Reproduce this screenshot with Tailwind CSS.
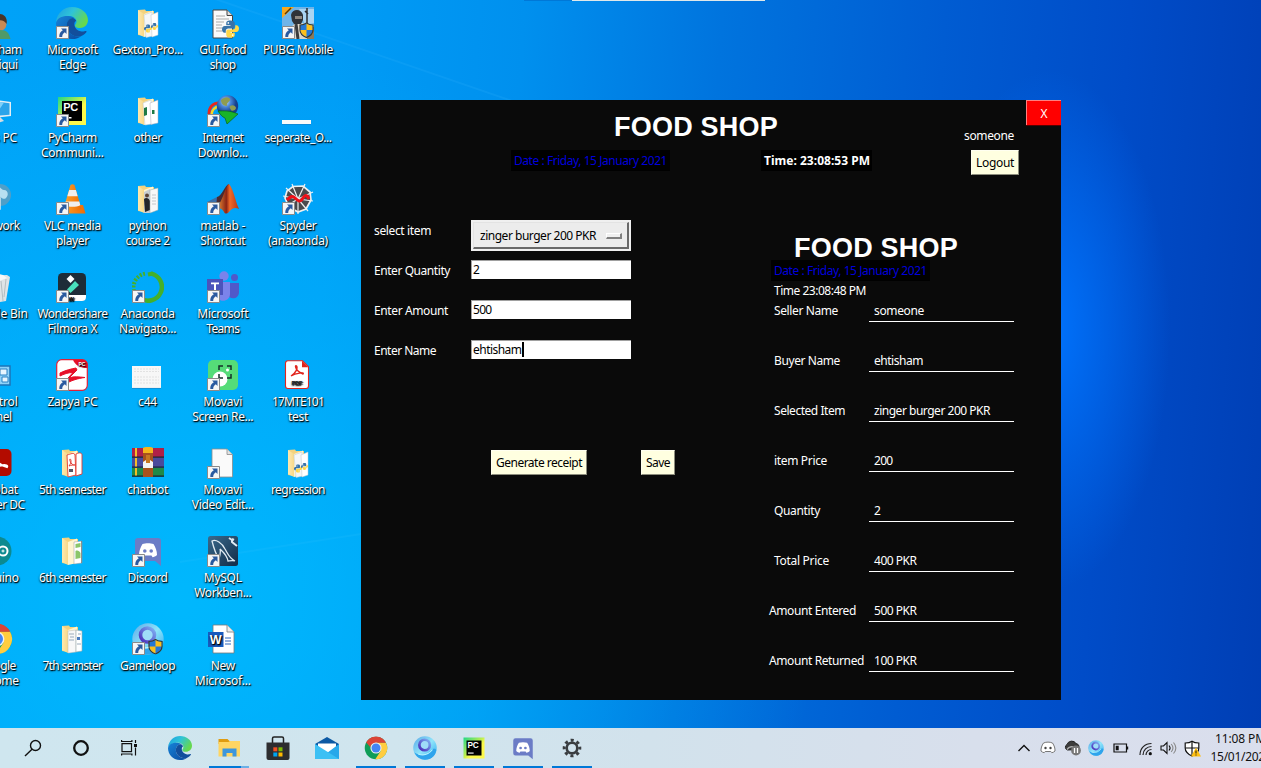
<!DOCTYPE html>
<html lang="en">
<head>
<meta charset="utf-8">
<title>Desktop</title>
<script src="https://cdn.jsdelivr.net/npm/@tailwindcss/browser@4"></script>
</head>
<body class="relative h-[768px] w-[1261px] overflow-hidden bg-[#0078e0] font-['Noto_Sans','Open_Sans',sans-serif] text-[12px] leading-[15px]">

<svg class="absolute" width="0" height="0">
  <defs>
    <linearGradient id="gEdge" x1="0" y1="0" x2="1" y2="0.5"><stop offset="0" stop-color="#1b9de2"/><stop offset=".5" stop-color="#2fc3d8"/><stop offset="1" stop-color="#66d84e"/></linearGradient>
    <linearGradient id="gEdge2" x1="0" y1="0" x2="1" y2="1"><stop offset="0" stop-color="#1683d8"/><stop offset="1" stop-color="#0c4a9e"/></linearGradient>
    <linearGradient id="gPc" x1="0" y1="0" x2="1" y2="1"><stop offset="0" stop-color="#21d789"/><stop offset=".45" stop-color="#b6ee52"/><stop offset=".6" stop-color="#fcf84a"/></linearGradient>
    <linearGradient id="gFold" x1="0" y1="0" x2="1" y2="0"><stop offset="0" stop-color="#fde9b0"/><stop offset="1" stop-color="#f8d888"/></linearGradient>
    <radialGradient id="gGlobe" cx=".4" cy=".3"><stop offset="0" stop-color="#cfe8ff"/><stop offset=".5" stop-color="#4a86d8"/><stop offset="1" stop-color="#16408c"/></radialGradient>
    <linearGradient id="gMat" x1="0" y1="0" x2="1" y2="0"><stop offset="0" stop-color="#f8a03c"/><stop offset=".45" stop-color="#8c2414"/><stop offset=".6" stop-color="#f06a28"/><stop offset="1" stop-color="#b83412"/></linearGradient>
    <linearGradient id="gLoop" x1="0" y1="0" x2="1" y2="1"><stop offset="0" stop-color="#5aa8e8"/><stop offset=".5" stop-color="#8fe4fa"/><stop offset="1" stop-color="#2aa8f0"/></linearGradient>
    <linearGradient id="gLoop2" x1="0" y1="1" x2="1" y2="0"><stop offset="0" stop-color="#4a28b8"/><stop offset="1" stop-color="#7fb4f4"/></linearGradient>
    <linearGradient id="gCone" x1="0" y1="0" x2="1" y2="0"><stop offset="0" stop-color="#ffa52c"/><stop offset="1" stop-color="#ee6c05"/></linearGradient>
    <linearGradient id="gSql" x1="0" y1="0" x2="1" y2="1"><stop offset="0" stop-color="#3a6a8c"/><stop offset="1" stop-color="#122c48"/></linearGradient>

    <symbol id="sc" viewBox="0 0 13 13"><path d="M.5.5h12v12H.5z" fill="#f6f6f6" stroke="#8a8a8a"/><path d="M5 2.500h5.500V8L8.800 6.300C7 7.600 6.200 9 6.200 11H3.300C3 8 4.300 6 6.800 4.300z" fill="#2a5aa0"/></symbol>
    <symbol id="shield" viewBox="0 0 15 16"><path d="M7.500 1C9.500 2.500 11.500 3 14 3v5c0 3.500-3 6-6.500 7.500C4 14 1 11.500 1 8V3c2.500 0 4.500-.5 6.500-2z" fill="#2478d8" stroke="#3a3a30" stroke-width="1.200"/><path d="M7.500 1.600C9.500 3 11.500 3.500 13.400 3.500V8H7.500zM7.500 8v6.800C4.500 13.500 1.600 11.500 1.600 8z" fill="#fcc01c"/></symbol>
    <symbol id="py" viewBox="0 0 18 18"><path d="M9 0c-4 0-4.500 1.500-4.500 3v2H9v.8H3C1 5.800 0 7.500 0 9.500S1 13 3 13h1v-2c0-1.500 1-2.600 2.600-2.600h4.800c1.200 0 2.100-1 2.100-2.200V3c0-2-1.500-3-4.500-3z" fill="#3873a8"/><path d="M9 18c4 0 4.500-1.500 4.500-3v-2H9v-.8h6c2 0 3-1.700 3-3.700S17 5 15 5h-1v2c0 1.500-1 2.600-2.600 2.600H6.600c-1.200 0-2.100 1-2.100 2.200V15c0 2 1.500 3 4.500 3z" fill="#ffd748"/><circle cx="6.700" cy="2.600" r=".9" fill="#fff"/><circle cx="11.300" cy="15.400" r=".9" fill="#fff"/></symbol>

    <symbol id="user" viewBox="0 0 32 32"><path d="M4 4h14l1 6H4z" fill="#f5d376"/><circle cx="18.500" cy="17" r="7" fill="#c98a55"/><path d="M11 15c0-7 4-8 8-8s8 4 6.500 10c-2-4-8-5-14.500-2z" fill="#4a3528"/><path d="M5 32c2-8 7-9 14-9s9 3 10.500 9z" fill="#4f9a68"/></symbol>
    <symbol id="thispc" viewBox="0 0 32 32"><path d="M2 3l28 4v14L2 24z" fill="#e4eef4"/><path d="M3 5l25.500 3.300v11.500L3 22z" fill="#2ba4ea"/><path d="M3 5l20 2.600-9 13.500L3 22z" fill="#7fd0f8"/><path d="M9 24l10-2 4 4-9 3z" fill="#d4dde2"/></symbol>
    <symbol id="net" viewBox="0 0 32 32"><circle cx="19" cy="12" r="11" fill="#4f9fc8"/><path d="M13 4c6-3 6 3 10 3s5 5 2 8-6-3-9-2-7-5-3-9z" fill="#b8dff0"/><path d="M3 15h16v11H3z" fill="#58b4e8" stroke="#d6e8f0" stroke-width="1.500"/><path d="M8 27h8v2H8z" fill="#d6e8f0"/></symbol>
    <symbol id="bin" viewBox="0 0 32 32"><path d="M6 5l20-1 3 2-4 24-13 2L4 28z" fill="#dfe4e6"/><path d="M8 3l7-1 7 2 4 3-8 3-12-3z" fill="#f8f8f8"/><path d="M20 10l2 20M13 10l1 20M25 8l-2 18" stroke="#b4bec2" fill="none"/></symbol>
    <symbol id="cpanel" viewBox="0 0 32 32"><path d="M3 7h26v19H3z" fill="#8fd2f8" stroke="#1d74b8" stroke-width="1.500"/><path d="M19 10h7v6h-7zM21 18h6v5h-6z" fill="#e8f6ff" stroke="#2a82c4"/><path d="M7 20l4-6 4 3 4-6" stroke="#e07828" fill="none"/></symbol>
    <symbol id="acro" viewBox="0 0 32 32"><rect x="1" y="2" width="29.500" height="27" rx="5" fill="#b30b00"/><path d="M8 24c8-8 8-18 6-18s-1 11 12 14c2-3-8-3-18 4z" fill="none" stroke="#fff" stroke-width="2"/></symbol>
    <symbol id="ardu" viewBox="0 0 32 32"><circle cx="16" cy="16" r="14.500" fill="#0c8a90"/><circle cx="9.500" cy="16" r="4.500" fill="none" stroke="#fff" stroke-width="2"/><circle cx="22" cy="16" r="4.500" fill="none" stroke="#fff" stroke-width="2"/><path d="M20.500 16h3M22 14.500v3" stroke="#fff"/></symbol>
    <symbol id="chrome" viewBox="0 0 32 32"><circle cx="16" cy="16" r="15" fill="#0f9d58"/><path d="M16 8.500h13A15 15 0 0 1 15 31l7.500-11.300z" fill="#ffcd40"/><path d="M16 16L3 8.500A15 15 0 0 1 29 8.500H16z" fill="#db4437"/><path d="M3 8.500l7 11.200L16 12z" fill="#0f9d58"/><path d="M3 8.500h0A15 15 0 0 1 29 8.500H16c-4 0-7 2.500-7.500 6.500z" fill="#db4437"/><circle cx="16" cy="16" r="7.400" fill="#f1f1f1"/><circle cx="16" cy="16" r="6" fill="#4285f4"/></symbol>
    <symbol id="edge" viewBox="0 0 32 32"><path d="M0 15C1 6 8 0 16 0c9 0 16 6 16 13 0 5-4 8-8 8-4 0-5-1.500-5-2.500s1.500-1.500 1.500-4c0-3-3-5.500-7.500-5.500C7 9 2 12 0 15z" fill="url(#gEdge)"/><path d="M0 16c1-4.500 5-7 12-7 3 0 5 1 6 2-4-.5-7.500 3-7.500 7.500 0 6 5 11 12 11 1 0 2-.2 3-.6C23 31 20 32 16 32 6 32 0 24 0 16z" fill="url(#gEdge2)"/><path d="M10.500 18.500c0-4 3-7.500 6.500-7.500 1.500.5 2.800 1.500 3.200 3-3 0-3 9.500 5.300 10.500 2 .2 3.500-.5 4.500-.5.700 0 .7.800.3 1.300-2 2.700-4.500 4.200-7.800 4.200-7 0-12-5-12-11z" fill="#124f9c"/></symbol>
    <symbol id="pycharm" viewBox="0 0 32 32"><path d="M2 2h28v28H2z" fill="url(#gPc)"/><path d="M6 6h20v20H6z" fill="#000"/><text x="7.300" y="15.800" font-family="Liberation Sans" font-weight="bold" font-size="11" fill="#fff" textLength="15">PC</text><path d="M8 22h7.500v1.500H8z" fill="#fff"/></symbol>
    <symbol id="vlc" viewBox="0 0 32 32"><path d="M6 22h21l2.500 8.500h-26z" fill="url(#gCone)"/><path d="M14.500 2c1-1 3-1 4 0l7 24c-3 2.500-15 2.500-18 0z" fill="url(#gCone)"/><path d="M13.200 7h6.700l1.800 6.300H11.300zM9.700 18.500h13.600l1 3.700c-4 2-11.600 2-15.600 0z" fill="#efefef"/></symbol>
    <symbol id="filmora" viewBox="0 0 32 32"><rect x="2" y="2" width="28" height="28" rx="4.500" fill="#1d2c38"/><path d="M2 24h28v2a4 4 0 0 1-4 4H6a4 4 0 0 1-4-4z" fill="#fff"/><path d="M10.500 8l4-4 4 4-4 4z" fill="#fff"/><path d="M11 18.500L19 10l4 4-8.500 8z" fill="#48e0bc"/><text x="12.500" y="29.500" font-family="Liberation Sans" font-weight="bold" font-size="7" fill="#111">w</text></symbol>
    <symbol id="zapya" viewBox="0 0 32 32"><rect x=".7" y=".7" width="30.600" height="30.600" rx="5" fill="#fff" stroke="#e02038" stroke-width="1.200"/><path d="M17 .7h9.500a5 5 0 0 1 5 5V9C24 9 19 6 17 .7z" fill="#e60f28"/><text x="22.500" y="6.500" font-family="Liberation Sans" font-size="5" font-weight="bold" fill="#fff">PC</text><path d="M4 14c6-3 11-4 16-5l1 2-8 8c5-2 10-1 16-.5-8 1-13 3-17 5l-3-1 8-9c-5 0-9 1.500-13 3.500z" fill="#e60f28" stroke="#e60f28"/></symbol>
    <symbol id="f0" viewBox="0 0 32 32"><path d="M6 3l7-.5 1 1.500h8v24l-10 1-6-1z" fill="#f3d27e"/><path d="M6 3l6 4v23l-6-3z" fill="url(#gFold)"/><path d="M12 7l9-3.500V28l-9 2z" fill="#fff5cf"/></symbol>
    <symbol id="fpy" viewBox="0 0 32 32"><use href="#f0"/><path d="M12 8l8-3 1 24-7 1.500z" fill="#f4f6f8" stroke="#bcc6cc" stroke-width=".5"/><path d="M19 8l7-3v23l-6 2z" fill="#fff" stroke="#bcc6cc" stroke-width=".5"/><use href="#py" x="12" y="15" width="8" height="13"/><use href="#py" x="19" y="13" width="7" height="13"/></symbol>
    <symbol id="fxl" viewBox="0 0 32 32"><use href="#f0"/><path d="M11 8l8-3 1 24-7 1z" fill="#fff" stroke="#bcc6cc" stroke-width=".5"/><path d="M18 8l8-3v23l-7 1.500z" fill="#fff" stroke="#aab" stroke-width=".5"/><path d="M12 13l3-1v8l-3 1zM20 15h2.500v4H20z" fill="#1f7a46"/></symbol>
    <symbol id="fph" viewBox="0 0 32 32"><use href="#f0"/><path d="M12 9l6-3v24h-6z" fill="#c9cfd2"/><path d="M12 16c2-2 5-1 6 2v9l-5 2z" fill="#23262a"/><circle cx="15" cy="12.500" r="2" fill="#5a4438"/><path d="M18 7l8-2v22l-8 3z" fill="#f8f8f8" stroke="#9aa" stroke-width=".5"/><path d="M20 12h4M20 15h4M20 18h4M20 21h4" stroke="#c4c8cc"/></symbol>
    <symbol id="fpdf" viewBox="0 0 32 32"><use href="#f0"/><path d="M11 8c4-1 7-3 8 0l1 20-8 2z" fill="#fff" stroke="#e23a32" stroke-width=".9"/><path d="M20 7c4-2 6-1 6 1v19l-6 2z" fill="#fff" stroke="#e23a32" stroke-width=".9"/><path d="M13 19c3-4 2-7 1-7s1 6 4 6-2-.5-5 1z" fill="none" stroke="#e23a32"/><path d="M13 22h4v3h-4z" fill="#556"/></symbol>
    <symbol id="fgr" viewBox="0 0 32 32"><use href="#f0"/><path d="M18 7l8-1v22l-8 1z" fill="#fff" stroke="#999" stroke-width=".5"/><path d="M19.500 9l5-1v4l-5 1zM19.500 16c2-1 4 0 5 2v5l-5 1z" fill="#8cc66a"/><path d="M25.500 6v22" stroke="#555" stroke-width=".6"/></symbol>
    <symbol id="fdoc" viewBox="0 0 32 32"><use href="#f0"/><path d="M12 8l8-1v22l-8 1z" fill="#f8f8f8" stroke="#bbb" stroke-width=".5"/><path d="M20 7l6 1v20l-6 1z" fill="#fff" stroke="#9aa" stroke-width=".6"/><path d="M13 11h5M14 14h4M13 17h5M22 11h3M21 21h4" stroke="#9ab"/><path d="M21 14h3v3h-3z" fill="#4a7cc0"/></symbol>
    <symbol id="conda" viewBox="0 0 32 32"><path d="M19 2.600A13.700 13.700 0 1 1 8 27" fill="none" stroke="#44b02a" stroke-width="4.500"/><path d="M13 2.600a14 14 0 0 0-10.500 19" fill="none" stroke="#44b02a" stroke-width="4" stroke-dasharray="2 1.500"/><path d="M16 3.500l5-1" stroke="#44b02a" stroke-width="4"/></symbol>
    <symbol id="loop" viewBox="0 0 32 32"><circle cx="16" cy="16" r="15.700" fill="url(#gLoop)"/><path d="M2 22c7 5 16 4 22-3 3-3 7-2 7 0-2 10-9 12.500-15 12.500S4 28 2 22z" fill="#2fa4ec"/><circle cx="15.500" cy="12" r="7" fill="#9fdcf8" stroke="url(#gLoop2)" stroke-width="3.600"/><path d="M7 24c8 3 15-1 19-6" stroke="#b8f4ff" stroke-width="1.500" fill="none"/></symbol>
    <symbol id="discord" viewBox="0 0 32 32"><path d="M6 3h20a3 3 0 0 1 3 3v25l-6-5H6a3 3 0 0 1-3-3V6a3 3 0 0 1 3-3z" fill="#6b7cc6"/><path d="M10.500 9c3-1 8-1 11 0 2 3 3.500 7 3.500 11-1.500 1.500-3 2-4.500 2.200L19.500 20.500h-7L11.500 22.200C10 22 8.500 21.500 7 20c0-4 1.500-8 3.500-11z" fill="#fff"/><circle cx="12.800" cy="16" r="1.800" fill="#6b7cc6"/><circle cx="19.200" cy="16" r="1.800" fill="#6b7cc6"/></symbol>
    <symbol id="rar" viewBox="0 0 32 32"><path d="M0 1h32v9.500H0z" fill="#b02048"/><path d="M0 11h32v9.500H0z" fill="#4a4a9c"/><path d="M0 21h32v8.500H0z" fill="#1f8a48"/><path d="M0 9.500h32v1.200H0zM0 19.500h32v1.200H0zM0 28.500h32v1.200H0z" fill="#1c2030"/><path d="M3 1h2v8.500H3zM3 11h2v8.500H3zM3 21h2v7.500H3z" fill="#f4bc28"/><path d="M11 1h10v29H11z" fill="#a8521c"/><path d="M11 1c2-1.500 8-1.500 10 0v5H11z" fill="#f6b51c"/><path d="M11 15l3-2h4l3 2v6H11z" fill="#f4f4f4"/><path d="M14 8h4v8h-4z" fill="#c87820"/></symbol>
    <symbol id="pyfile" viewBox="0 0 32 32"><path d="M6 3h14l5.500 5.500V31H6z" fill="#fafafa" stroke="#444" /><path d="M20 3v5.500h5.500" fill="#ddd" stroke="#444"/><path d="M9 9h9M9 12h13M9 15h8M9 18h6M9 21h7M9 24h6" stroke="#aaa"/><use href="#py" x="15" y="12" width="17" height="20"/></symbol>
    <symbol id="idm" viewBox="0 0 32 32"><path d="M2 19C2 11 7 8 12 8" fill="none" stroke="#e8281c" stroke-width="3"/><path d="M4.500 20c0-6 4-8 8-9" fill="none" stroke="#f8d424" stroke-width="2.500"/><circle cx="20.500" cy="11" r="10.700" fill="url(#gGlobe)"/><path d="M14 5c4-4 8-3 9-1s-4 4-3 6-6 1-6-5zM23 11c3-2 6 0 6 2s-4 4-5 2-2-3-1-4z" fill="#8f9c50"/><path d="M11 16c6 0 11-1 20 3L20 29l-2-6c-3-1-5-4-7-7z" fill="#18b428" stroke="#0a6418" stroke-width=".7"/></symbol>
    <symbol id="matlab" viewBox="0 0 32 32"><path d="M0 19l10-5 5 5-6 6z" fill="#3a6ea8"/><path d="M10 14c5-1 8-12 12-13-2 10-6 18-13 24z" fill="#4a2a30"/><path d="M9 25c7-6 9-22 13-24 4 4 7 19 10 25-4-2-7-1-10 3-2 2-4 2-5 0-2-4-5-4-8-4z" fill="url(#gMat)"/></symbol>
    <symbol id="teams" viewBox="0 0 32 32"><circle cx="27.500" cy="6.500" r="3.500" fill="#5059c9"/><circle cx="17" cy="5" r="4.700" fill="#7b83eb"/><path d="M20 12h12v9c0 7-9 9-12 2z" fill="#5059c9"/><path d="M9 11h14v12c0 9-14 9-14 0z" fill="#7b83eb"/><path d="M0 8h16v16H0z" fill="#4b53bc"/><path d="M4 11.500h8v1.800H9v8H7v-8H4z" fill="#fff"/></symbol>
    <symbol id="movavi" viewBox="0 0 32 32"><rect x="1" y="1" width="30" height="30" rx="5" fill="#55dc78"/><circle cx="13" cy="20" r="7.500" fill="#fff"/><path d="M12 11V7h4M20 7h4v4M24 15v4h-4M16 19h-4v-4" fill="none" stroke="#14302a" stroke-width="1.500"/><circle cx="20.500" cy="11" r="1.500" fill="#fff"/></symbol>
    <symbol id="blank" viewBox="0 0 32 32"><path d="M5 2h15l5.500 5.500V30H5z" fill="#fafafa" stroke="#8a8a8a" stroke-width=".8"/><path d="M20 2v5.500h5.500" fill="#e2e2e2" stroke="#8a8a8a" stroke-width=".8"/></symbol>
    <symbol id="sql" viewBox="0 0 32 32"><rect x="1" y="1" width="30" height="30" rx="2.500" fill="url(#gSql)"/><path d="M12 24C8 18 6 10 5 6c4-2 10 2 13 8 3 5 4 9 10 12-3-1-6 0-7 0-1-6-5-9-8-12 1 3 0 6-1 10z" fill="none" stroke="#dfeaf2" stroke-width="1.300"/><path d="M22 3l3 2 0 2 5 4M25 4l2 1" stroke="#dfeaf2" stroke-width="2" fill="none"/></symbol>
    <symbol id="word" viewBox="0 0 32 32"><path d="M6 2h14l7 7v21H6z" fill="#fff" stroke="#7a7a7a" stroke-width=".8"/><path d="M20 2v7h7" fill="#eee" stroke="#7a7a7a" stroke-width=".8"/><path d="M18 15h6M18 18h6M18 21h6" stroke="#2b66c0"/><path d="M1 9h15.500v15H1z" fill="#185abd"/><text x="2.800" y="20.800" font-family="Liberation Sans" font-weight="bold" font-size="12.500" fill="#fff">W</text></symbol>
    <symbol id="pubg" viewBox="0 0 32 32"><path d="M0 0h32v32H0z" fill="#6fb4e8"/><path d="M0 20h32v12H0z" fill="#8a7a5c"/><path d="M17 2h15v14l-9 2z" fill="#a9d4f2"/><path d="M0 0h12L0 11z" fill="#f6a81c"/><path d="M3 7l6-6" stroke="#5a3a08" stroke-width="1.500"/><path d="M8 32l1-12 5-4h7l4 16z" fill="#ded8cc"/><path d="M9 8c1-6 10-7 12 0v5l-2 4h-7l-2-3z" fill="#2f3338"/><path d="M13 9h7v3h-7z" fill="#8e8880"/><path d="M25 1v18M23 4l3 3" stroke="#2a2c30" stroke-width="1.500"/><path d="M14 17l2 15" stroke="#3c3c3c" stroke-width="3"/><use href="#shield" x="17" y="15" width="15" height="16"/></symbol>
    <symbol id="sep" viewBox="0 0 32 32"><path d="M0 25h29v4H0z" fill="#fafafa"/><path d="M0 29h29v.7H0z" fill="#2070b0" opacity=".6"/></symbol>
    <symbol id="spyder" viewBox="0 0 32 32"><path d="M11 3.500L21 3l7 6 1 8-5 9-8 3-9-5-4-9 2-7z" fill="#4a4a4c" stroke="#f0f0f0" stroke-width="1.700"/><path d="M16 16L10 1M16 16L23 1M16 16L31 9M16 16L31 18M16 16L26 28M16 16v15M16 16L3 24M16 16L1 13M16 16L4 5" stroke="#f0f0f0" stroke-width="1.200"/><path d="M5 17c3-3 5-5 8-2s5 5 8 0 5-1 6 1" fill="none" stroke="#f01018" stroke-width="3"/></symbol>
    <symbol id="c44" viewBox="0 0 32 32"><path d="M0 7h29v22H0z" fill="#f7f7f7"/><path d="M2 10h25M2 12.500h25M2 18h25M2 21h25M2 24h25" stroke="#dcdcdc" stroke-width=".8" stroke-dasharray="2 1"/><path d="M0 29.400h29" stroke="#2070b0" opacity=".5"/></symbol>
    <symbol id="pdf" viewBox="0 0 32 32"><path d="M6 1.700h14.500l6 6V27a2.500 2.500 0 0 1-2.500 2.500H6A2.500 2.500 0 0 1 3.500 27V4.200A2.500 2.500 0 0 1 6 1.700z" fill="#fff" stroke="#e2241c" stroke-width="1.100"/><path d="M20 1.700l6.500 6.500H20z" fill="#e2241c"/><path d="M9 17c5-3 7-8 5.500-10S12 11 21 15c2-2-7-1-12 2z" fill="none" stroke="#e2241c" stroke-width="1.400"/><text x="9.500" y="25.800" font-family="Liberation Sans" font-weight="bold" font-size="6" fill="#222" textLength="11">PDF</text></symbol>
  </defs>
</svg>

<!-- wallpaper -->
<div class="absolute inset-0 bg-[linear-gradient(94deg,#00a2f8_0%,#009cf6_26%,#0090ee_40%,#0074de_55%,#005cd2_72%,#004cc8_86%,#003eb4_100%)]"></div>
<div class="absolute inset-0 bg-[radial-gradient(ellipse_640px_560px_at_180px_600px,rgba(0,190,255,.8),rgba(0,190,255,0)_100%)]"></div>
<div class="absolute inset-0 bg-[radial-gradient(ellipse_120px_260px_at_1050px_330px,rgba(0,116,255,.95),rgba(0,100,250,0)_100%)]"></div>
<svg class="absolute inset-0" width="1261" height="768"><path d="M160 -20L512 101" stroke="#3cb8ff" stroke-width="2" opacity=".16"/><path d="M180 562L361 534" stroke="#40c8ff" stroke-width="2" opacity=".12"/></svg>
<div class="absolute top-0 left-[524px] h-px w-[48px] bg-[#0078d7]"></div>
<div class="absolute top-0 left-[572px] h-px w-[193px] bg-[#dfe8ea]"></div>

<!-- desktop shortcuts -->
<main id="desk" class="relative -ml-[40.4px] grid w-[376px] grid-flow-col grid-cols-[repeat(5,75.2px)] grid-rows-[repeat(8,88px)] pt-[7px] text-center text-white [text-shadow:1px_1px_1px_#000,0_1px_2px_rgba(0,0,0,.8)]"></main>

<!-- application window -->
<section class="absolute top-[100px] left-[361px] h-[600px] w-[700px] bg-[#0a0a0a] text-white">
  <header class="flex h-[111px]">
    <div class="w-[600px]">
      <h1 class="mt-[12px] ml-[253px] h-[38px] font-['Liberation_Sans'] text-[27px] leading-[31px] font-bold"><span data-w="164">FOOD SHOP</span></h1>
      <div class="flex pl-[150px]">
        <div class="h-[21px] w-[159px] bg-black pl-[3px] leading-[21px] text-[#0000dc]"><span data-w="153">Date : Friday, 15 January 2021</span></div>
        <div class="ml-[91px] h-[21px] w-[111px] bg-black pl-[3px] leading-[21px] font-bold"><span data-w="106">Time: 23:08:53 PM</span></div>
      </div>
    </div>
    <div class="flex w-[100px] flex-col items-start">
      <button class="h-[25px] w-[35px] self-end border-t border-l border-[#ff8080] bg-[#ff0000] shadow-[0_1px_0_#500]">X</button>
      <div class="ml-[3px] h-[25px] leading-[22px]"><span data-w="50">someone</span></div>
      <button class="ml-[10px] h-[25px] w-[48px] border border-t-[#fffff0] border-r-[#8c8c7c] border-b-[#8c8c7c] border-l-[#fffff0] bg-[#ffffe0] text-black"><span data-w="38">Logout</span></button>
    </div>
  </header>
  <div class="flex">
    <form class="w-[400px] pl-[13px]">
      <div class="flex h-[40px] items-end"><label class="w-[97px] leading-[40px]"><span data-w="57">select item</span></label>
        <div class="h-[31px] w-[160px] bg-[#f0f0f0] p-[2px] text-black">
          <div class="flex h-[27px] items-center justify-between border-t border-r-2 border-b-2 border-l border-t-[#e3e3e3] border-r-[#696969] border-b-[#696969] border-l-[#e3e3e3] bg-[#ececec] pt-[1px] pr-[5px] pl-[6px]"><span data-w="116">zinger burger 200 PKR</span><i class="h-[6px] w-[16px] border-t border-r-2 border-b-2 border-l border-t-white border-r-[#808080] border-b-[#808080] border-l-white bg-[#f0f0f0]"></i></div>
        </div></div>
      <div class="flex h-[40px]"><label class="w-[97px] leading-[40px]"><span data-w="76">Enter Quantity</span></label><div class="mt-[9px] h-[19px] w-[160px] border-t border-l border-[#a0a0a0] bg-white pl-[1px] leading-[18px] text-black">2</div></div>
      <div class="flex h-[40px]"><label class="w-[97px] leading-[40px]"><span data-w="74">Enter Amount</span></label><div class="mt-[9px] h-[19px] w-[160px] border-t border-l border-[#a0a0a0] bg-white pl-[1px] leading-[18px] text-black"><span data-w="18.500">500</span></div></div>
      <div class="flex h-[40px]"><label class="w-[97px] leading-[40px]"><span data-w="62">Enter Name</span></label><div class="mt-[9px] flex h-[19px] w-[160px] border-t border-l border-[#a0a0a0] bg-white pl-[1px] leading-[18px] text-black"><span data-w="48.500">ehtisham</span><i class="mt-[1px] h-[15px] w-[2px] bg-black"></i></div></div>
      <div class="mt-[79px] flex pl-[117px] text-black">
        <button type="button" class="h-[25px] w-[96px] border border-t-[#fffff0] border-r-[#8c8c7c] border-b-[#8c8c7c] border-l-[#fffff0] bg-[#ffffe0]"><span data-w="86">Generate receipt</span></button>
        <button type="button" class="ml-[54px] h-[25px] w-[34px] border border-t-[#fffff0] border-r-[#8c8c7c] border-b-[#8c8c7c] border-l-[#fffff0] bg-[#ffffe0]"><span data-w="24">Save</span></button>
      </div>
    </form>
    <div class="pt-[22px] pl-[8px]">
      <h2 class="ml-[25px] h-[27px] font-['Liberation_Sans'] text-[27px] leading-[31px] font-bold"><span data-w="164">FOOD SHOP</span></h2>
      <div class="ml-[2px] h-[21px] w-[159px] bg-black pl-[3px] leading-[21px] text-[#0000dc]"><span data-w="153">Date : Friday, 15 January 2021</span></div>
      <div class="ml-[5px] h-[20px] leading-[19px]"><span data-w="92">Time 23:08:48 PM</span></div>
      <dl class="grid grid-cols-[100px_145px] auto-rows-[50px] leading-[20px]">
        <dt class="pl-[5px]"><span data-w="64">Seller Name</span></dt><dd class="h-[21px] border-b border-white pl-[5px]"><span data-w="50">someone</span></dd>
        <dt class="pl-[5px]"><span data-w="66">Buyer Name</span></dt><dd class="h-[21px] border-b border-white pl-[5px]"><span data-w="49">ehtisham</span></dd>
        <dt class="pl-[5px]"><span data-w="71">Selected Item</span></dt><dd class="h-[21px] border-b border-white pl-[5px]"><span data-w="116">zinger burger 200 PKR</span></dd>
        <dt class="pl-[5px]"><span data-w="53">item Price</span></dt><dd class="h-[21px] border-b border-white pl-[5px]"><span data-w="18.500">200</span></dd>
        <dt class="pl-[5px]"><span data-w="46">Quantity</span></dt><dd class="h-[21px] border-b border-white pl-[5px]">2</dd>
        <dt class="pl-[5px]"><span data-w="55">Total Price</span></dt><dd class="h-[21px] border-b border-white pl-[5px]"><span data-w="42.500">400 PKR</span></dd>
        <dt><span data-w="87">Amount Entered</span></dt><dd class="h-[21px] border-b border-white pl-[5px]"><span data-w="42.500">500 PKR</span></dd>
        <dt><span data-w="95">Amount Returned</span></dt><dd class="h-[21px] border-b border-white pl-[5px]"><span data-w="42.500">100 PKR</span></dd>
      </dl>
    </div>
  </div>
</section>

<!-- taskbar -->
<footer class="absolute bottom-0 left-0 flex h-[40px] w-[1300px] bg-[linear-gradient(90deg,#cfe6ef_0%,#d0e5ee_30%,#d2e2ec_50%,#d8dfec_75%,#dadeed_100%)] pl-[9px] text-[#111]">
  <div class="flex w-[146px] items-center">
    <div class="flex w-[48px] justify-center"><svg width="18" height="18" viewBox="0 0 18 18" fill="none" stroke="#111" stroke-width="1.400"><circle cx="11.500" cy="6.500" r="5"/><path d="M8 10.200L1 17"/></svg></div>
    <div class="flex w-[48px] justify-center"><svg width="18" height="18" viewBox="0 0 18 18" fill="none" stroke="#111" stroke-width="2.300"><circle cx="9" cy="9" r="6.800"/></svg></div>
    <div class="flex w-[48px] justify-center"><svg width="18" height="18" viewBox="0 0 18 18" fill="none" stroke="#111" stroke-width="1.200"><path d="M2 4.600h9.500v8H2zM1.600 1v1.500h10.300V1M1.600 16.500v-1.500h10.300v1.500M15.500 1v3M15.500 8.500v8"/><path d="M14 5h3v3h-3z" fill="#111" stroke="none"/></svg></div>
  </div>
  <div class="flex w-[49px] items-center justify-center"><svg width="24" height="24"><use href="#edge"/></svg></div>
  <div class="flex w-[49px] flex-col items-center justify-between pt-[8px]">
    <svg width="24" height="24" viewBox="0 0 24 24"><path d="M1.500 3h9l2 2H22v3H1.500z" fill="#e09c10"/><path d="M1.500 6h10l1.500-1H23v15.500H1.500z" fill="#ffd562"/><path d="M5.500 20.500v-8h14v8h-4V17h-6v3.500z" fill="#3d96dc"/></svg>
    <div class="flex h-[2px] w-[40px]"><i class="w-[32px] bg-[#0078d7]"></i><i class="w-[8px] bg-[#6cb0e6]"></i></div></div>
  <div class="flex w-[49px] items-center justify-center"><svg width="24" height="24" viewBox="0 0 24 24"><path d="M6.500 7V2.500A1.500 1.500 0 0 1 8 1h8a1.500 1.500 0 0 1 1.500 1.500V7" fill="none" stroke="#222" stroke-width="1.500"/><path d="M.5 6.500h23V22a2 2 0 0 1-2 2h-19a2 2 0 0 1-2-2z" fill="#2d2d2f"/><path d="M7.300 11.300h4v4h-4z" fill="#f25022"/><path d="M12.500 11.300h4v4h-4z" fill="#7fba00"/><path d="M7.300 16.500h4v4h-4z" fill="#00a4ef"/><path d="M12.500 16.500h4v4h-4z" fill="#ffb900"/></svg></div>
  <div class="flex w-[49px] items-center justify-center"><svg width="24" height="24" viewBox="0 0 24 24"><path d="M0 8l12-7 12 7v15H0z" fill="#0c59a4"/><path d="M3 7.500h18V16H3z" fill="#fff"/><path d="M0 8l12 9 12-9v15H0z" fill="#28a8ea"/><path d="M0 8l24 15H0z" fill="#3cc0f4"/></svg></div>
  <div class="flex w-[49px] flex-col items-center justify-between pt-[8px]"><svg width="24" height="24"><use href="#chrome"/></svg><i class="h-[2px] w-[40px] bg-[#0078d7]"></i></div>
  <div class="flex w-[49px] flex-col items-center justify-between pt-[8px]"><svg width="24" height="24"><use href="#loop"/></svg><i class="h-[2px] w-[40px] bg-[#0078d7]"></i></div>
  <div class="flex w-[49px] flex-col items-center justify-between pt-[8px]"><svg width="24" height="24"><use href="#pycharm"/></svg><i class="h-[2px] w-[40px] bg-[#0078d7]"></i></div>
  <div class="flex w-[49px] flex-col items-center justify-between pt-[8px]"><svg width="24" height="24"><use href="#discord"/></svg><i class="h-[2px] w-[40px] bg-[#0078d7]"></i></div>
  <div class="flex w-[49px] flex-col items-center justify-between pt-[8px]"><svg width="24" height="24" viewBox="0 0 24 24" fill="none" stroke="#3a3d40"><circle cx="12" cy="12" r="5.300" stroke-width="2.600"/><circle cx="12" cy="12" r="7.800" stroke-width="3" stroke-dasharray="3.060 3.060" stroke-dashoffset="1.530"/></svg><i class="h-[2px] w-[40px] bg-[#0078d7]"></i></div>
  <div class="ml-[416px] flex items-center">
    <div class="flex w-[24px] justify-center"><svg width="14" height="14" viewBox="0 0 14 14" fill="none" stroke="#111" stroke-width="1.400"><path d="M1.500 10L7 4.500l5.500 5.500"/></svg></div>
    <div class="flex w-[24px] justify-center"><svg width="16" height="14" viewBox="0 0 16 14"><path d="M3.500 2c3-1.200 6-1.200 9 0 1.800 2.500 2.700 5.500 2.500 8-1 1-2 1.500-3.200 1.700l-1-1.200H5.200l-1 1.200C3 11.500 2 11 1 10c-.2-2.500.7-5.500 2.500-8z" fill="#fff" stroke="#777"/><circle cx="5.500" cy="7" r="1.200" fill="#444"/><circle cx="10.500" cy="7" r="1.200" fill="#444"/></svg></div>
    <div class="flex w-[24px] justify-center"><svg width="17" height="16" viewBox="0 0 17 16"><path d="M3.500 10A3 3 0 0 1 3 4.500 5 5 0 0 1 12 3.500a3.500 3.500 0 0 1 2 6z" fill="#3c3c3c" stroke="#222"/><path d="M3 9.500c2-3 6-4 9-1" stroke="#aaa" fill="none" stroke-width="1.500"/><circle cx="12" cy="10.500" r="4.900" fill="#777"/><path d="M10.500 8v5M13.500 8v5" stroke="#fff" stroke-width="1.300"/></svg></div>
    <div class="flex w-[24px] justify-center"><svg width="16" height="16"><use href="#loop"/></svg></div>
    <div class="flex w-[25px] justify-center"><svg width="16" height="12" viewBox="0 0 16 12"><path d="M1 2h12.500v8H1z" fill="none" stroke="#111" stroke-width="1.200"/><path d="M2.700 3.700h3v4.600h-3zM13.500 4.500h1.700v3h-1.700z" fill="#111"/></svg></div>
    <div class="flex w-[24px] justify-center"><svg width="15" height="15" viewBox="0 0 15 15" fill="none" stroke="#222" stroke-width="1.200"><path d="M2 14C2 7 7 2.500 13.500 2.500M5 14c0-5 4-8.500 8.500-8.500M8 14c0-3 2.500-5.500 5.500-5.500" /><circle cx="12.300" cy="12.700" r="1.600" fill="#111" stroke="none"/></svg></div>
    <div class="flex w-[22px] justify-center"><svg width="17" height="14" viewBox="0 0 17 14" fill="none" stroke="#111" stroke-width="1.100"><path d="M1 5h2.500L7 1.500v11L3.500 9H1z"/><path d="M9 4.500c1.300 1.500 1.300 3.500 0 5"/><path d="M11.200 3c2.200 2.500 2.200 5.500 0 8M13.500 1.500c3 3.500 3 7.500 0 11" stroke="#888"/></svg></div>
    <div class="flex w-[26px] justify-center"><svg width="17" height="17" viewBox="0 0 17 17"><path d="M8 1.200C10 2.700 12.500 3 14.800 3v5c0 4-3.500 6.500-6.800 8-3.300-1.500-6.800-4-6.800-8V3C3.500 3 6 2.700 8 1.200z" fill="#fff" stroke="#111" stroke-width="1.200"/><path d="M8 1.500V16M1.500 8h13" stroke="#111" stroke-width="1.200"/><path d="M12 7.500l5 9H7z" fill="#ffc012"/><path d="M12 10.500v3M12 14.500v1" stroke="#111"/></svg></div>
  </div>
  <div class="ml-[5px] w-[62px] pt-[2px] text-center leading-[18px]"><div class="pr-[1px]"><span data-w="51">11:08 PM</span></div><div><span data-w="61">15/01/2021</span></div></div>
</footer>

<script>
// [symbol, has shortcut arrow, [[line, width], ...]] listed column by column
const items = [
 ['user',0,[['ehtisham',49],['siddiqui',41]]],['thispc',0,[['This PC',39]]],['net',0,[['Network',45]]],['bin',0,[['Recycle Bin',61]]],['cpanel',0,[['Control',41],['Panel',29]]],['acro',0,[['Acrobat',41],['Reader DC',55]]],['ardu',0,[['Arduino',43]]],['chrome',0,[['Google',37],['Chrome',43]]],
 ['edge',1,[['Microsoft',51],['Edge',27]]],['pycharm',1,[['PyCharm',49],['Communi...',63]]],['vlc',1,[['VLC media',57],['player',33]]],['filmora',1,[['Wondershare',70],['Filmora X',50]]],['zapya',1,[['Zapya PC',50]]],['fpdf',0,[['5th semester',67]]],['fgr',0,[['6th semester',67]]],['fdoc',0,[['7th semster',60]]],
 ['fpy',0,[['Gexton_Pro...',70]]],['fxl',0,[['other',28]]],['fph',0,[['python',38],['course 2',44]]],['conda',1,[['Anaconda',54],['Navigato...',57]]],['c44',0,[['c44',19]]],['rar',0,[['chatbot',41]]],['discord',1,[['Discord',40]]],['loop',2,[['Gameloop',55]]],
 ['pyfile',0,[['GUI food',47],['shop',26]]],['idm',1,[['Internet',41],['Downlo...',50]]],['matlab',1,[['matlab -',45],['Shortcut',45]]],['teams',1,[['Microsoft',51],['Teams',33]]],['movavi',1,[['Movavi',39],['Screen Re...',61]]],['blank',1,[['Movavi',39],['Video Edit...',62]]],['sql',1,[['MySQL',38],['Workben...',57]]],['word',0,[['New',24],['Microsof...',56]]],
 ['pubg',1,[['PUBG Mobile',70]]],['sep',0,[['seperate_O...',67]]],['spyder',1,[['Spyder',37],['(anaconda)',60]]],null,['pdf',0,[['17MTE101',52],['test',20]]],['fpy',0,[['regression',54]]]
];
document.getElementById('desk').innerHTML = items.map(i => !i ? '<div></div>' :
 `<div class="flex flex-col items-center"><svg width="32" height="32" class="mb-[3px] shrink-0"><use href="#${i[0]}"/>${i[1]?'<use href="#sc" x="0" y="19" width="13" height="13"/>':''}${i[1]===2?'<use href="#shield" x="16" y="15.500" width="15" height="16"/>':''}</svg>${i[2].map(l=>`<div class="h-[15px] whitespace-nowrap"><span data-w="${l[1]}">${l[0]}</span></div>`).join('')}</div>`).join('');
// Adjust tracking so every label takes its nominal width
function fit() {
  const all = [...document.querySelectorAll('[data-w]')];
  all.forEach(s => { s.style.whiteSpace = 'nowrap'; s.style.letterSpacing = '0px'; });
  const widths = all.map(s => s.getBoundingClientRect().width);
  all.forEach((s, k) => { s.style.letterSpacing = ((+s.dataset.w - widths[k]) / s.textContent.length) + 'px'; });
}
fit();
addEventListener('load', () => { fit(); requestAnimationFrame(fit); });
document.fonts.ready.then(fit);
new ResizeObserver(fit).observe(document.body);
</script>
</body>
</html>
